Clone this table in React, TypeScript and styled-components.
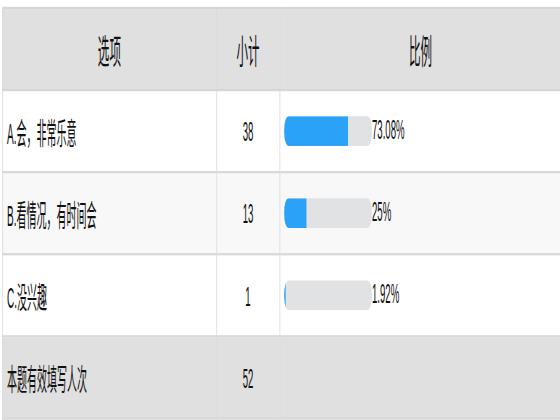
import React from "react";
import styled, { createGlobalStyle } from "styled-components";

const Global = createGlobalStyle`
  html { overflow: hidden; }
  html, body { margin: 0; padding: 0; background: #ffffff; }
  body { font-family: "Liberation Sans", "Noto Sans CJK SC", sans-serif; color: #111; }
`;

const Viewport = styled.div`
  width: 560px;
  height: 420px;
  overflow: hidden;
`;

const Stage = styled.div`
  width: 728px;
  padding: 3px 0 0 2.6px;
  transform: scale(0.77, 2.28);
  transform-origin: 0 0;
`;

const Table = styled.table`
  border-collapse: collapse;
  width: 727px;
  table-layout: fixed;
  font-size: 12px;
`;

const Row = styled.tr<{ $bg: string }>`
  background: ${(p) => p.$bg};
  height: 36px;
`;

const HeadCell = styled.th`
  border: 1px solid #d6d6d6;
  font-weight: normal;
  font-size: 15px;
  text-align: center;
  color: #111;
  padding: 0;
`;

const Cell = styled.td<{ $align?: string; $cjk?: boolean }>`
  border: 1px solid #d9d9d9;
  text-align: ${(p) => p.$align || "left"};
  font-size: ${(p) => (p.$cjk ? "13px" : "12.5px")};
  padding: 0 0 0 ${(p) => (p.$align === "center" ? "0" : "5.5px")};
  vertical-align: middle;
  white-space: nowrap;
`;

const BarWrap = styled.div`
  display: flex;
  align-items: center;
`;

const Track = styled.div`
  width: 114px;
  height: 13px;
  background: #e1e2e4;
  border-radius: 6px;
  overflow: hidden;
  flex: none;
`;

const Fill = styled.div`
  height: 100%;
  background: #2aa2f7;
`;

const Pct = styled.span`
  line-height: 13px;
`;

const data = [
  { label: "A.会，非常乐意", n: 38, pct: 73.08, txt: "73.08%", bg: "#ffffff" },
  { label: "B.看情况，有时间会", n: 13, pct: 25, txt: "25%", bg: "#f8f8f8" },
  { label: "C.没兴趣", n: 1, pct: 1.92, txt: "1.92%", bg: "#ffffff" },
];

export default function App() {
  return (
    <>
      <Global />
      <Viewport>
        <Stage>
          <Table>
            <colgroup>
              <col style={{ width: 278 }} />
              <col style={{ width: 82 }} />
              <col />
            </colgroup>
            <thead>
              <Row $bg="#e0e0e0">
                <HeadCell>选项</HeadCell>
                <HeadCell>小计</HeadCell>
                <HeadCell>比例</HeadCell>
              </Row>
            </thead>
            <tbody>
              {data.map((d) => (
                <Row key={d.label} $bg={d.bg}>
                  <Cell $cjk>{d.label}</Cell>
                  <Cell $align="center">{d.n}</Cell>
                  <Cell>
                    <BarWrap>
                      <Track>
                        <Fill style={{ width: `${d.pct}%` }} />
                      </Track>
                      <Pct>{d.txt}</Pct>
                    </BarWrap>
                  </Cell>
                </Row>
              ))}
              <Row $bg="#e0e0e0">
                <Cell $cjk>本题有效填写人次</Cell>
                <Cell $align="center">52</Cell>
                <Cell />
              </Row>
            </tbody>
          </Table>
        </Stage>
      </Viewport>
    </>
  );
}
